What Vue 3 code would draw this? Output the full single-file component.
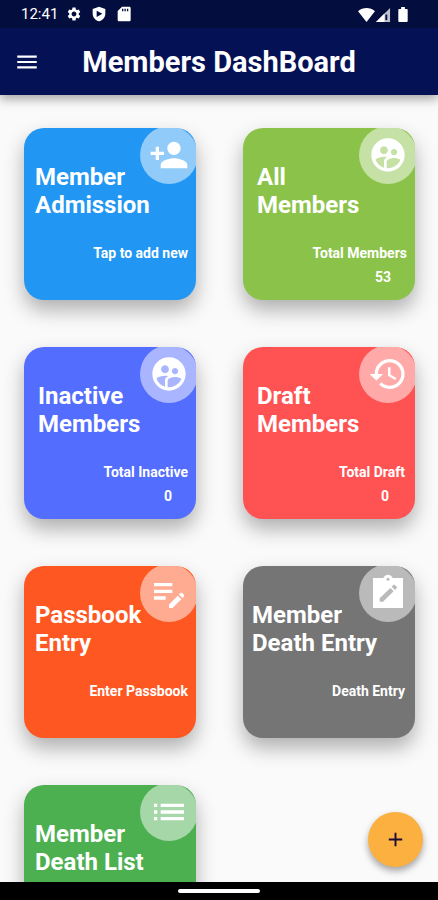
<script setup>
    import { ref } from "vue";

    //icon paths, all on a 24 grid
    const icons = {
      addPerson: "M15 12c2.21 0 4-1.79 4-4s-1.79-4-4-4-4 1.79-4 4 1.79 4 4 4zm-9-2V7H4v3H1v2h3v3h2v-3h3v-2H6zm9 4c-2.67 0-8 1.34-8 4v2h16v-2c0-2.66-5.33-4-8-4z",
      group: "M11.99 2c-5.52 0-10 4.48-10 10s4.48 10 10 10 10-4.48 10-10-4.48-10-10-10zm3.61 6.34c1.07 0 1.93.86 1.93 1.93 0 1.07-.86 1.93-1.93 1.93-1.07 0-1.93-.86-1.93-1.93-.01-1.07.86-1.93 1.93-1.93zm-6-1.58c1.3 0 2.36 1.06 2.36 2.36 0 1.3-1.06 2.36-2.36 2.36s-2.36-1.06-2.36-2.36c0-1.31 1.05-2.36 2.36-2.36zm0 9.13v3.75c-2.4-.75-4.3-2.6-5.14-4.96 1.05-1.12 3.67-1.69 5.14-1.69.53 0 1.2.08 1.9.22-1.64.87-1.9 2.02-1.9 2.68zM11.99 20c-.27 0-.53-.01-.79-.04v-4.07c0-1.42 2.94-2.13 4.4-2.13 1.07 0 2.92.39 3.84 1.15-1.17 2.97-4.06 5.09-7.45 5.09z",
      history: "M13 3c-4.97 0-9 4.03-9 9H1l3.89 3.89.07.14L9 12H6c0-3.87 3.13-7 7-7s7 3.13 7 7-3.13 7-7 7c-1.93 0-3.68-.79-4.94-2.06l-1.42 1.42C8.27 19.99 10.51 21 13 21c4.97 0 9-4.03 9-9s-4.03-9-9-9zm-1 5v5l4.28 2.54.72-1.21-3.5-2.08V8H12z",
      editNote: "M3 10h11v2H3v-2zm0-2h11V6H3v2zm0 8h7v-2H3v2zm15.01-3.13.71-.71c.39-.39 1.02-.39 1.41 0l.71.71c.39.39.39 1.02 0 1.41l-.71.71-2.12-2.12zm-.71.71-5.3 5.3V21h2.12l5.3-5.3-2.12-2.12z",
      clipboard: "M21 3h-6.2C14.4 1.8 13.3 1 12 1s-2.4.8-2.8 2H3v18h18V3zM12 2.8a.9.9 0 1 1 0 1.8.9.9 0 0 1 0-1.8zM7 15.2l6.4-6.2 2 2L9 17.2H7v-2zM14.2 8.2l1-1c.3-.3.7-.3 1 0l1 1c.3.3.3.7 0 1l-1 1-2-2z",
      list: "M3 13h2v-2H3v2zm0 4h2v-2H3v2zm0-8h2V7H3v2zm4 4h14v-2H7v2zm0 4h14v-2H7v2zM7 7v2h14V7H7z"
    };

    const cards = [
      { lines: ["Member", "Admission"], note: "Tap to add new", color: "blue", icon: icons.addPerson },
      { lines: ["All", "Members"], note: "Total Members", count: 53, color: "lime", icon: icons.group },
      { lines: ["Inactive", "Members"], note: "Total Inactive", count: 0, color: "indigo", icon: icons.group },
      { lines: ["Draft", "Members"], note: "Total Draft", count: 0, color: "red", icon: icons.history },
      { lines: ["Passbook", "Entry"], note: "Enter Passbook", color: "orange", icon: icons.editNote },
      { lines: ["Member", "Death Entry"], note: "Death Entry", color: "grey", icon: icons.clipboard },
      { lines: ["Member", "Death List"], note: "", color: "green", icon: icons.list }
    ];

    const selected = ref(null);

    //select card
    const openCard = (index) => {
      selected.value = index;
    };
</script>

<template>
  <div class="screen">
    <header class="top">
      <!--status bar-->
      <div class="status">
        <span class="clock">12:41</span>
        <svg class="status-icon" viewBox="0 0 24 24"><path d="M19.14 12.94c.04-.3.06-.61.06-.94 0-.32-.02-.64-.07-.94l2.03-1.58c.18-.14.23-.41.12-.61l-1.92-3.32c-.12-.22-.37-.29-.59-.22l-2.39.96c-.5-.38-1.03-.7-1.62-.94l-.36-2.54c-.04-.24-.24-.41-.48-.41h-3.84c-.24 0-.43.17-.47.41l-.36 2.54c-.59.24-1.13.57-1.62.94l-2.39-.96c-.22-.08-.47 0-.59.22L2.74 8.87c-.12.21-.08.47.12.61l2.03 1.58c-.05.3-.09.63-.09.94s.02.64.07.94l-2.03 1.58c-.18.14-.23.41-.12.61l1.92 3.32c.12.22.37.29.59.22l2.39-.96c.5.38 1.03.7 1.62.94l.36 2.54c.05.24.24.41.48.41h3.84c.24 0 .44-.17.47-.41l.36-2.54c.59-.24 1.13-.56 1.62-.94l2.39.96c.22.08.47 0 .59-.22l1.92-3.32c.12-.22.07-.47-.12-.61l-2.01-1.58zM12 15.6c-1.98 0-3.6-1.62-3.6-3.6s1.62-3.6 3.6-3.6 3.6 1.62 3.6 3.6-1.62 3.6-3.6 3.6z" /></svg>
        <svg class="status-icon" viewBox="0 0 24 24"><path fill-rule="evenodd" d="M12 1L2.500 4.500v7C2.500 17 6.500 21.500 12 23c5.500-1.500 9.500-6 9.500-11.500v-7L12 1zM8.500 7l8.500 4.800-8.500 4.800V7z" /></svg>
        <svg class="status-icon" viewBox="0 0 24 24"><path fill-rule="evenodd" d="M20 1H9L2.500 7.500V21c0 1.100.9 2 2 2H20c1.100 0 2-.9 2-2V3c0-1.100-.9-2-2-2zM9 4h2v4H9V4zm3.700 0h2v4h-2V4zm3.700 0h2v4h-2V4z" /></svg>
        <span class="spacer"></span>
        <svg class="signal-icon" viewBox="0 0 18 16"><path d="M0 4.500C5 0 13 0 18 4.500L9 16z" /></svg>
        <svg class="signal-icon" viewBox="0 0 18 16"><path opacity=".75" d="M1 16L16 1v15z" /><path d="M1 16L10 7v9z" /><path class="signal-gap" d="M11 8h2v6h-2z" /></svg>
        <svg class="battery-icon" viewBox="0 0 10 16"><path d="M3 0h4v2h2c.6 0 1 .4 1 1v12c0 .6-.4 1-1 1H1c-.6 0-1-.4-1-1V3c0-.6.4-1 1-1h2z" /></svg>
      </div>
      <!--app bar-->
      <div class="bar">
        <button class="menu" aria-label="Menu">
          <svg viewBox="0 0 24 24"><path d="M3 18h18v-2H3v2zm0-5h18v-2H3v2zm0-7v2h18V6H3z" /></svg>
        </button>
        <h1>Members DashBoard</h1>
      </div>
    </header>

    <main class="body">
      <div class="grid">
        <button
          v-for="(card, index) in cards"
          :key="index"
          class="card"
          :class="card.color"
          @click="openCard(index)"
        >
          <span class="badge">
            <svg viewBox="0 0 24 24"><path fill-rule="evenodd" :d="card.icon" /></svg>
          </span>
          <span class="title">
            <span v-for="line in card.lines" :key="line">{{ line }}</span>
          </span>
          <span class="note">{{ card.note }}</span>
          <span v-if="card.count !== undefined" class="count">{{ card.count }}</span>
        </button>
      </div>
    </main>

    <!--floating button-->
    <button class="fab" aria-label="Add">
      <svg viewBox="0 0 24 24"><path d="M19 13h-6v6h-2v-6H5v-2h6V5h2v6h6v2z" /></svg>
    </button>

    <!--system navigation-->
    <footer class="nav"><span class="pill"></span></footer>
  </div>
</template>

<style>
    body {
    background-color: #fafafa;
    }
</style>

<style scoped>
    .screen {
    position: relative;
    display: flex;
    flex-direction: column;
    height: 100vh;
    overflow: hidden;
    background-color: #fafafa;
    font-family: Roboto, "Noto Sans", sans-serif;
    color: white;
    }

    button {
    border: none;
    padding: 0;
    font-family: inherit;
    color: inherit;
    cursor: pointer;
    }

    svg {
    display: block;
    fill: currentColor;
    }

    .top {
    position: relative;
    z-index: 1;
    flex: none;
    background-color: #051155;
    box-shadow: 0 4px 10px rgba(0, 0, 0, 0.35);
    }

    .status {
    display: flex;
    align-items: center;
    height: 28px;
    padding: 0 30px 0 21px;
    background-color: #030d3e;
    }

    .clock {
    margin-right: 8px;
    font-size: 15px;
    line-height: 28px;
    }

    .status-icon {
    width: 16px;
    height: 16px;
    margin-right: 9px;
    }

    .spacer {
    flex: 1;
    }

    .signal-icon {
    width: 17px;
    height: 15px;
    }

    .signal-gap {
    fill: #030d3e;
    }

    .battery-icon {
    width: 10px;
    height: 15px;
    margin-left: 6px;
    }

    .bar {
    display: flex;
    align-items: center;
    height: 67px;
    padding: 0 14px;
    }

    .menu {
    width: 26px;
    background: none;
    }

    h1 {
    flex: 1;
    margin: 0 26px 0 0;
    font-size: 29px;
    font-weight: 700;
    line-height: 36px;
    text-align: center;
    }

    .body {
    flex: 1;
    min-height: 0;
    overflow-y: auto;
    scrollbar-width: none;
    }

    .grid {
    display: grid;
    grid-template-columns: 1fr 1fr;
    gap: 47px;
    padding: 33px 23px 33px 24px;
    }

    .card {
    position: relative;
    display: flex;
    flex-direction: column;
    aspect-ratio: 1;
    min-width: 0;
    padding: 35px 8px 0 11px;
    overflow: hidden;
    border-radius: 20px;
    box-shadow: 0 10px 20px rgba(0, 0, 0, 0.3);
    text-align: left;
    }

    .badge {
    position: absolute;
    top: -2px;
    right: -2px;
    display: flex;
    align-items: center;
    justify-content: center;
    width: 58px;
    height: 58px;
    border-radius: 50%;
    background-color: rgba(255, 255, 255, 0.5);
    }

    .badge svg {
    width: 40px;
    height: 40px;
    }

    .title {
    position: relative;
    display: flex;
    flex-direction: column;
    font-size: 24px;
    font-weight: 700;
    line-height: 28px;
    white-space: nowrap;
    }

    .note {
    margin-top: 22px;
    font-size: 14px;
    font-weight: 700;
    line-height: 24px;
    text-align: right;
    }

    .count {
    padding-right: 16px;
    font-size: 14px;
    font-weight: 700;
    line-height: 24px;
    text-align: right;
    }

    .blue {
    background-color: #2196f3;
    }

    .lime {
    padding-left: 14px;
    background-color: #8bc34a;
    }

    .indigo {
    padding-left: 14px;
    background-color: #536dfe;
    }

    .red {
    padding-left: 14px;
    padding-right: 10px;
    background-color: #ff5252;
    }

    .orange {
    background-color: #ff5722;
    }

    .grey {
    padding-left: 9px;
    padding-right: 10px;
    background-color: #757575;
    }

    .green {
    background-color: #4caf50;
    }

    .fab {
    position: absolute;
    right: 15px;
    bottom: 33px;
    display: flex;
    align-items: center;
    justify-content: center;
    width: 55px;
    height: 55px;
    border-radius: 50%;
    background-color: #fbb040;
    box-shadow: 0 4px 7px rgba(0, 0, 0, 0.35);
    color: #1b0b3a;
    }

    .fab svg {
    width: 23px;
    height: 23px;
    }

    .nav {
    display: flex;
    flex: none;
    align-items: center;
    justify-content: center;
    height: 18px;
    background-color: black;
    }

    .pill {
    width: 82px;
    height: 4px;
    border-radius: 2px;
    background-color: white;
    }
</style>
